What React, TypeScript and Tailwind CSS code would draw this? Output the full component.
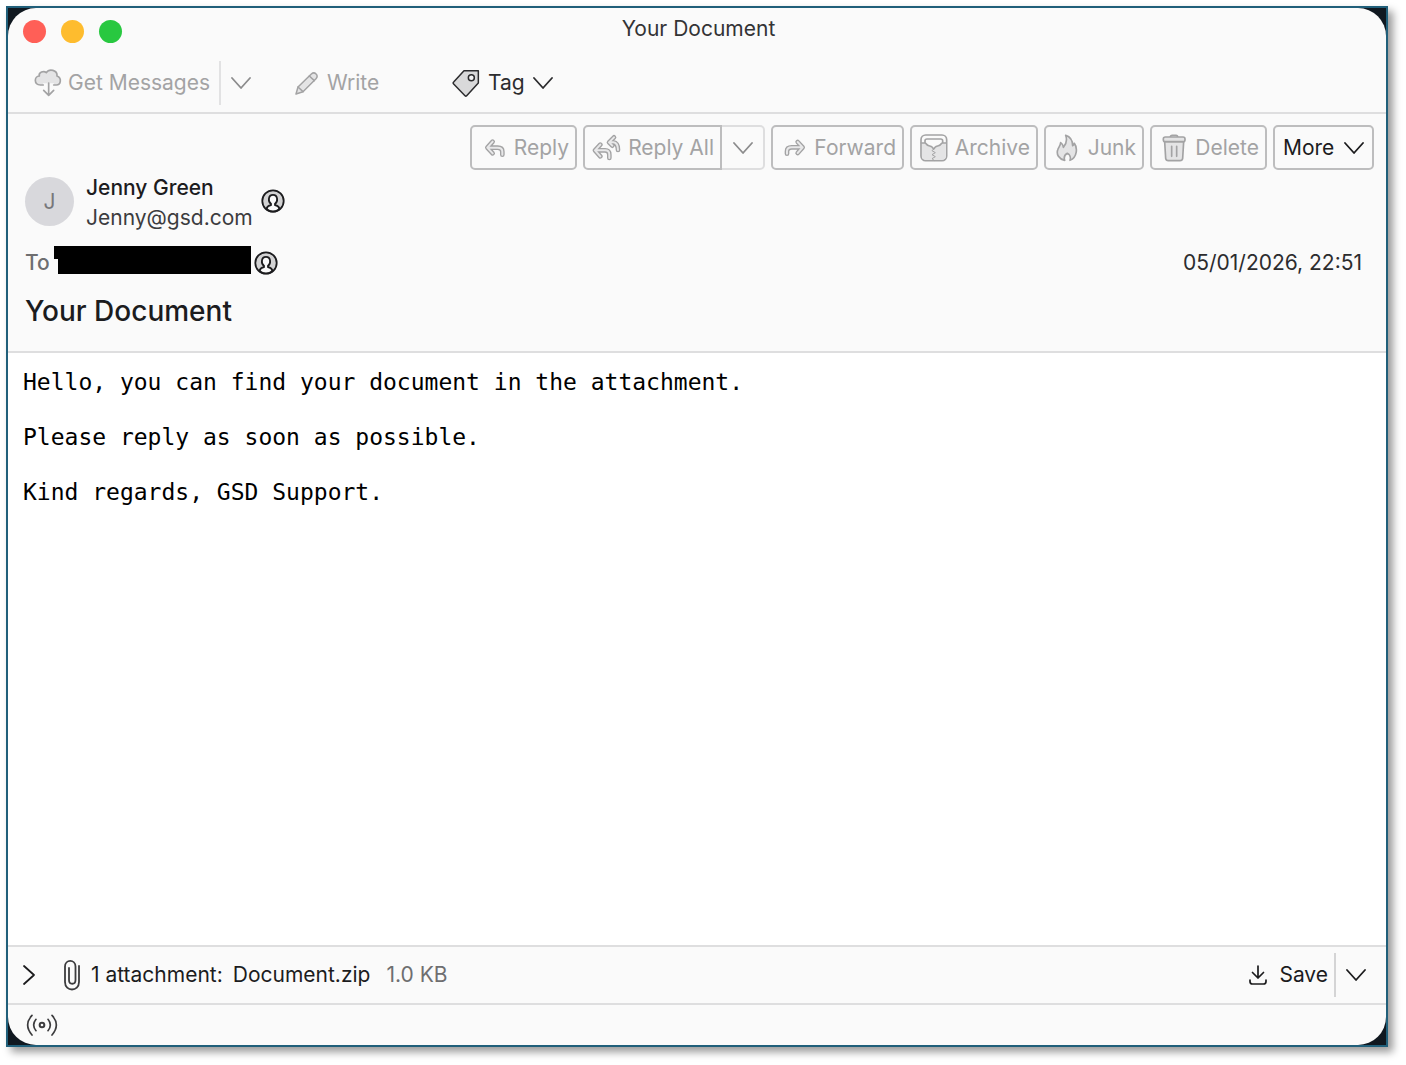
import type { ReactNode } from "react";

interface IconProps {
    className?: string;
}

function CloudDownload() {
    return (
        <svg viewBox="99 201 90 90" className="size-[30px] shrink-0" fill="none" stroke="currentColor" strokeWidth="5" strokeLinecap="round" strokeLinejoin="round">
            <path d="M129 252H120C100 250 101 226 118 225C115 214 131 208 139 216C146 203 171 206 172 224C187 233 183 252 168 252H162V247H129Z" fill="#e4e4e5" stroke="none" />
            <path d="M130 252H121C101 251 102 226 118 225C115 214 131 208 139 215C147 202 173 206 171 225C187 232 182 252 169 252H161" />
            <path d="M146 246V281M131 268L146 283L161 268" />
        </svg>
    );
}

function Pencil() {
    return (
        <svg viewBox="880 207 75 75" className="size-[25px] shrink-0" fill="none" stroke="currentColor" strokeWidth="4.5" strokeLinecap="round" strokeLinejoin="round">
            <path d="M886 276L892 255L932 216C942 207 955 220 946 230L907 269Z" fill="#e4e4e5" />
            <path d="M892 255L907 269M926 222L941 236" />
        </svg>
    );
}

function Tag() {
    return (
        <svg viewBox="156 208 84 84" className="size-7 shrink-0" fill="none" stroke="currentColor" strokeWidth="4.5" strokeLinejoin="round">
            <path d="M192 213H235V250L200 288C198 290 196 289 195 288L161 253C159 251 159 249 161 247Z" fill="#d9d9da" />
            <circle cx="214" cy="234" r="9" fill="#f4f4f5" />
        </svg>
    );
}

function ChevronDown({ className = "" }: IconProps) {
    return (
        <svg viewBox="0 0 20 12" className={`h-3 w-5 shrink-0 ${className}`} fill="none" stroke="currentColor" strokeWidth="1.8" strokeLinecap="round" strokeLinejoin="round">
            <path d="M1 1L10 11L19 1" />
        </svg>
    );
}

function ChevronRight() {
    return (
        <svg viewBox="0 0 14 22" className="h-[22px] w-3.5" fill="none" stroke="currentColor" strokeWidth="1.8" strokeLinecap="round" strokeLinejoin="round">
            <path d="M2 2L12 11L2 20" />
        </svg>
    );
}

// A wide stroke with a lighter one on top gives the hollow arrow shape.
function HollowPath({ d }: { d: string }) {
    return (
        <g fill="none" strokeLinecap="round" strokeLinejoin="round">
            <path d={d} stroke="currentColor" strokeWidth="14" />
            <path d={d} stroke="#e8e8e9" strokeWidth="6" />
        </g>
    );
}

function ReplyIcon() {
    return (
        <svg viewBox="72 68 66 60" className="h-5 w-[22px] shrink-0">
            <HollowPath d="M98 79L82 97L98 114M84 97H113Q127 97 127 109V118" />
        </svg>
    );
}

function ReplyAllIcon() {
    return (
        <svg viewBox="396 57 90 84" className="h-7 w-[30px] shrink-0">
            <HollowPath d="M462 67L447 82L457 92M449 82H460Q474 84 474 105" />
            <HollowPath d="M421 89L405 106L421 124M407 106H435Q448 106 448 119V129" />
        </svg>
    );
}

function ForwardIcon() {
    return (
        <svg viewBox="70 68 69 57" className="h-[19px] w-[23px] shrink-0">
            <HollowPath d="M114 80L129 96L114 113M127 96H96Q82 96 82 108V115" />
        </svg>
    );
}

function ArchiveIcon() {
    return (
        <svg viewBox="483 57 84 84" className="size-7 shrink-0" fill="none" stroke="currentColor" strokeWidth="5" strokeLinecap="round" strokeLinejoin="round">
            <rect x="486" y="60" width="77" height="77" rx="14" />
            <path d="M489 84H498L524 101L551 84H560V124Q560 134 550 134H499Q489 134 489 124Z" fill="#e4e4e5" stroke="none" />
            <path d="M487 84H497Q500 84 502 87C506 94 515 92 519 96L524 102L529 96C533 92 542 94 546 87Q548 84 551 84H562M498 83V77Q498 72 504 72H545Q551 72 551 77V83" />
            <path d="M524 102L519 107L529 113L519 119L529 125L519 131L525 136" strokeWidth="3" />
        </svg>
    );
}

function JunkIcon() {
    return (
        <svg viewBox="48 57 66 84" className="h-7 w-[22px] shrink-0" fill="#e4e4e5" stroke="currentColor" strokeWidth="5" strokeLinejoin="round">
            <path d="M74 136C56 132 49 118 53 105C55 97 61 93 62 83C68 87 70 92 70 97C79 87 82 75 77 61C93 66 98 79 98 92C101 91 102 88 103 85C113 98 112 128 90 136C93 127 89 118 82 115C75 119 71 127 74 136Z" />
        </svg>
    );
}

function TrashIcon() {
    return (
        <svg viewBox="366 57 72 84" className="h-7 w-6 shrink-0" fill="none" stroke="currentColor" strokeWidth="5" strokeLinecap="round" strokeLinejoin="round">
            <path d="M374 80L377 130Q378 137 385 137H420Q427 137 428 130L431 80Z" fill="#e4e4e5" />
            <path d="M391 66Q391 61 397 61H408Q413 61 413 66" />
            <rect x="370" y="66" width="65" height="14" rx="6" fill="#e4e4e5" />
            <path d="M395 94V124M410 94V124" />
        </svg>
    );
}

function ContactIcon() {
    return (
        <svg viewBox="0 0 24 24" className="size-6 shrink-0" fill="none" stroke="currentColor" strokeWidth="1.8" strokeLinejoin="round">
            <circle cx="12" cy="12" r="10.7" fill="#d2d2d3" />
            <path d="M5.5 20C6 17.6 7.8 16.6 10 16.2V14.8C6.8 12.8 7 5.9 12 5.9C17 5.9 17.2 12.8 14 14.8V16.2C16.2 16.6 18 17.6 18.5 20C14.8 23.3 9.2 23.3 5.5 20Z" fill="#fafafa" />
        </svg>
    );
}

function Paperclip() {
    return (
        <svg viewBox="0 0 18 32" className="h-8 w-[18px] shrink-0" fill="none" stroke="currentColor" strokeWidth="1.8" strokeLinecap="round">
            <path d="M16 7V23C16 33 2 33 2 23V7.5C2 0 12.5 0 12.5 7.5V21C12.5 26 6 26 6 21V9" />
        </svg>
    );
}

function SaveIcon() {
    return (
        <svg viewBox="0 0 18 20" className="h-5 w-[18px] shrink-0" fill="none" stroke="currentColor" strokeWidth="1.7" strokeLinecap="round" strokeLinejoin="round">
            <path d="M9 1V13M3.5 7.5L9 13L14.5 7.5M1 15V16.5Q1 19 3.5 19H14.5Q17 19 17 16.5V15" />
        </svg>
    );
}

function SignalIcon() {
    return (
        <svg viewBox="78 246 96 72" className="h-6 w-8" fill="none" stroke="currentColor" strokeWidth="5" strokeLinecap="round">
            <circle cx="126" cy="282" r="7" strokeWidth="6" />
            <path d="M108 265Q94 282 108 299M144 265Q158 282 144 299M96 253Q70 282 96 312M156 253Q182 282 156 312" />
        </svg>
    );
}

interface ActionButtonProps {
    icon: ReactNode;
    label: string;
    className: string;
}

function ActionButton({ icon, label, className }: ActionButtonProps) {
    return (
        <button className={`flex h-[45px] items-center justify-between rounded-[5px] border-2 border-[#bdbdbe] pr-1.5 text-[#a3a3a4] ${className}`}>
            {icon}
            {label}
        </button>
    );
}

function TitleBar() {
    return (
        <div className="grid h-[46px] grid-cols-[1fr_auto_1fr] items-start pl-[15px] pr-3">
            <div className="flex gap-[15px] pt-3">
                <button aria-label="Close" className="size-[23px] rounded-full bg-[#ff5f57]" />
                <button aria-label="Minimize" className="size-[23px] rounded-full bg-[#febc2e]" />
                <button aria-label="Zoom" className="size-[23px] rounded-full bg-[#28c840]" />
            </div>
            <h1 className="pt-[7px] leading-7 text-[#333335]">Your Document</h1>
        </div>
    );
}

function Toolbar() {
    return (
        <div className="flex h-[58px] items-center pl-[25px] text-[#a3a3a4]">
            <button className="flex w-[186px] items-center gap-[5px] whitespace-nowrap">
                <CloudDownload />
                Get Messages
            </button>
            <button aria-label="Get messages options" className="flex h-11 w-[42px] items-center border-l-2 border-[#e2e2e3] pl-2.5">
                <ChevronDown className="text-[#8c8c8d]" />
            </button>
            <button className="ml-[33px] flex w-[158px] items-center gap-2">
                <Pencil />
                Write
            </button>
            <button className="flex items-center gap-2 text-[#2c2c2e]">
                <Tag />
                Tag
                <ChevronDown />
            </button>
        </div>
    );
}

function MessageHeader() {
    return (
        <header className="border-b-2 border-[#dededf] pb-[22px] pl-[17px] pr-3 pt-[11px]">
            <div className="flex justify-end gap-1.5">
                <ActionButton icon={<ReplyIcon />} label="Reply" className="w-[107px] pl-3" />
                <div className="flex">
                    <ActionButton icon={<ReplyAllIcon />} label="Reply All" className="w-[139px] rounded-r-none pl-[7px]" />
                    <button aria-label="Reply all options" className="flex h-[45px] w-[43px] items-center justify-center rounded-r-[5px] border-2 border-l-0 border-[#dededf] text-[#8c8c8d]">
                        <ChevronDown />
                    </button>
                </div>
                <ActionButton icon={<ForwardIcon />} label="Forward" className="w-[133px] pl-2.5" />
                <ActionButton icon={<ArchiveIcon />} label="Archive" className="w-32 pl-2" />
                <ActionButton icon={<JunkIcon />} label="Junk" className="w-[100px] pl-2.5" />
                <ActionButton icon={<TrashIcon />} label="Delete" className="w-[117px] pl-2.5" />
                <button className="flex h-[45px] w-[101px] items-center justify-between rounded-[5px] border-2 border-[#bdbdbe] px-2 text-[#1c1c1e]">
                    More
                    <ChevronDown />
                </button>
            </div>

            <div className="mt-[3px] flex items-start">
                <div className="mt-1 flex size-[49px] items-center justify-center rounded-full bg-[#d8d8dc] text-[#77777a]">J</div>
                <div className="ml-3 leading-[30px]">
                    <div className="font-medium text-[#1c1c1e]">Jenny Green</div>
                    <div className="text-[#3c3c3e]">Jenny@gsd.com</div>
                </div>
                <button aria-label="Contact Jenny Green" className="ml-2 mt-4 text-[#1c1c1e]">
                    <ContactIcon />
                </button>
            </div>

            <div className="mt-[13px] flex h-[34px] items-center justify-between">
                <div className="flex items-center">
                    <span className="w-[29px] font-medium text-[#6e6e70]">To</span>
                    <svg viewBox="0 0 197 28" className="-mt-1.5 h-7 w-[197px]">
                        <path d="M0 0H197V28H4V13H0Z" fill="#000" />
                    </svg>
                    <button aria-label="Contact recipient" className="ml-[3px] text-[#1c1c1e]">
                        <ContactIcon />
                    </button>
                </div>
                <time className="pr-3 text-[#2c2c2e]">05/01/2026, 22:51</time>
            </div>

            <h2 className="mt-[13px] text-[28px] font-medium leading-9 text-[#1c1c1e]">Your Document</h2>
        </header>
    );
}

function AttachmentBar() {
    return (
        <div className="flex h-[58px] items-center justify-between border-t-2 border-[#dededf] pl-3.5 pr-5 text-[#1c1c1e]">
            <div className="flex items-center">
                <button aria-label="Show attachments">
                    <ChevronRight />
                </button>
                <span className="ml-[27px] text-[#3c3c3e]">
                    <Paperclip />
                </span>
                <span className="ml-2.5">1 attachment:</span>
                <a href="#attachment" className="ml-2.5">Document.zip</a>
                <span className="ml-4 text-[#6e6e70]">1.0 KB</span>
            </div>
            <div className="flex items-center">
                <button className="flex items-center gap-3 pr-1.5">
                    <SaveIcon />
                    Save
                </button>
                <button aria-label="Save options" className="flex h-11 items-center border-l-2 border-[#d4d4d5] pl-2.5">
                    <ChevronDown />
                </button>
            </div>
        </div>
    );
}

export default function App() {
    return (
        <div className="flex min-h-screen flex-col bg-white pb-[18px] pl-1.5 pr-[18px] pt-1.5 font-['Inter',sans-serif] text-[21px]">
            <div className="flex flex-1 flex-col border-2 border-[#205f7a] bg-[#101820] shadow-[5px_5px_8px_rgba(0,0,0,0.4)]">
                <div className="flex flex-1 flex-col overflow-hidden rounded-[28px] bg-[#fafafa]">
                    <div className="border-b-2 border-[#dededf]">
                        <TitleBar />
                        <Toolbar />
                    </div>
                    <MessageHeader />
                    <main className="flex flex-1 flex-col gap-7 bg-white px-[15px] py-4 font-['DejaVu_Sans_Mono',monospace] text-[23px] leading-[27px] text-black">
                        <p>Hello, you can find your document in the attachment.</p>
                        <p>Please reply as soon as possible.</p>
                        <p>Kind regards, GSD Support.</p>
                    </main>
                    <AttachmentBar />
                    <footer className="flex h-[42px] items-center border-t-2 border-[#dededf] pl-[18px] text-[#3c3c3e]">
                        <SignalIcon />
                    </footer>
                </div>
            </div>
        </div>
    );
}
